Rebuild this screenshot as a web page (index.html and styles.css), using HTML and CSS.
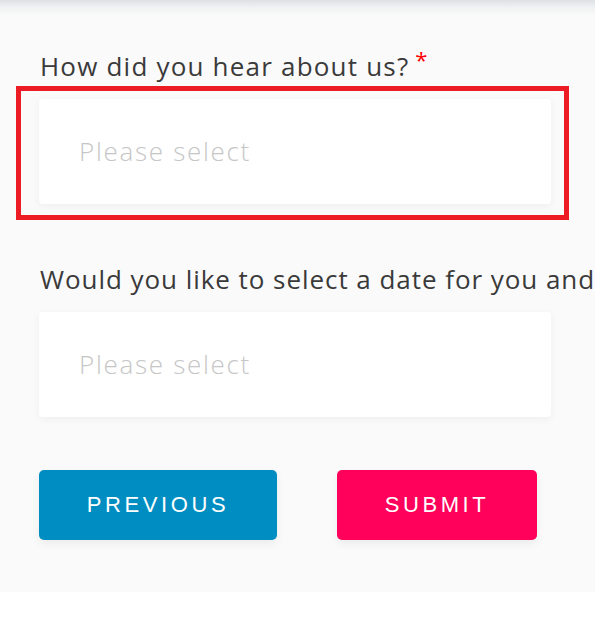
FILE: index.html
```html
<!DOCTYPE html>
<html>
<head>
<meta charset="utf-8">
<link rel="stylesheet" href="styles.css">
</head>
<body>
<div class="page">
  <div class="topshade"></div>
  <form class="form">
    <div class="field">
      <label class="label">How did you hear about us?<span class="req">*</span></label>
      <div class="select highlighted"><span class="placeholder">Please select</span></div>
    </div>
    <div class="field">
      <label class="label label-long">Would you like to select a date for you and</label>
      <div class="select"><span class="placeholder">Please select</span></div>
    </div>
    <div class="actions">
      <button type="button" class="btn btn-prev">PREVIOUS</button>
      <button type="button" class="btn btn-submit">SUBMIT</button>
    </div>
  </form>
</div>
</body>
</html>
```

FILE: styles.css
```css
html, body {
  margin: 0;
  padding: 0;
  background: #ffffff;
  overflow: hidden;
}
.page {
  position: relative;
  background: #fafafa;
  height: 592px;
  width: 595px;
  overflow: hidden;
}
.topshade {
  position: absolute;
  left: 0;
  right: 0;
  top: 0;
  height: 16px;
  background: linear-gradient(to bottom, #dfe0e3 0%, #f0f1f2 45%, rgba(250,250,250,0) 100%);
}
.form {
  padding: 51px 0 0 39px;
  display: flex;
  flex-direction: column;
}
.field {
  display: flex;
  flex-direction: column;
}
.field + .field {
  margin-top: 60px;
}
.label {
  display: block;
  height: 30px;
  line-height: 30px;
  font-family: "Open Sans", sans-serif;
  font-size: 26px;
  letter-spacing: 1.2px;
  color: #3a3a3a;
  white-space: nowrap;
  padding-left: 1px;
  margin-bottom: 18px;
}
.label-long {
  letter-spacing: 0.95px;
}
.req {
  color: #ff0000;
  font-size: 22px;
  margin-left: 6px;
  position: relative;
  top: -8px;
}
.select {
  position: relative;
  width: 512px;
  height: 105px;
  background: #ffffff;
  border-radius: 4px;
  box-shadow: 0 2px 8px rgba(0,0,0,0.05);
  display: flex;
  align-items: center;
  padding-left: 40px;
  box-sizing: border-box;
}
.highlighted::after {
  content: "";
  position: absolute;
  left: -23px;
  top: -13px;
  right: -18px;
  bottom: -16px;
  border: 5px solid #ed1c24;
}
.placeholder {
  font-family: "Open Sans", sans-serif;
  font-weight: 300;
  font-size: 26px;
  letter-spacing: 1.7px;
  color: #c6c6c6;
  position: relative;
  top: -1px;
}
.actions {
  display: flex;
  gap: 60px;
  margin-top: 53px;
}
.btn {
  height: 70px;
  border: none;
  border-radius: 5px;
  color: #ffffff;
  font-family: "Liberation Sans", Arial, sans-serif;
  font-size: 22px;
  letter-spacing: 3.6px;
  box-shadow: 0 4px 10px rgba(0,0,0,0.06);
  padding: 0;
}
.btn-prev {
  width: 238px;
  background: #008ec2;
}
.btn-submit {
  width: 200px;
  background: #ff005a;
}
```
